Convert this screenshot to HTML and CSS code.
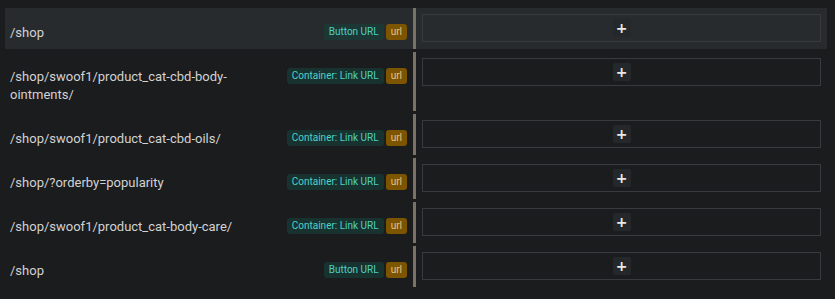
FILE: index.html
```html
<!DOCTYPE html>
<html lang="en">
<head>
    <meta charset="UTF-8">
    <title>Link map</title>
    <link rel="stylesheet" href="styles.css">
</head>
<body>
    <div class="link-list">
        <div class="link-row active">
            <div class="link-info">
                <span class="link-path">/shop</span>
                <span class="tags"><span class="tag tag-type">Button URL</span><span class="tag tag-kind">url</span></span>
            </div>
            <div class="link-target"><div class="drop-box"><button class="add-btn">+</button></div></div>
        </div>
        <div class="link-row">
            <div class="link-info">
                <span class="link-path">/shop/swoof1/product_cat-cbd-body-ointments/</span>
                <span class="tags"><span class="tag tag-type">Container: Link URL</span><span class="tag tag-kind">url</span></span>
            </div>
            <div class="link-target"><div class="drop-box"><button class="add-btn">+</button></div></div>
        </div>
        <div class="link-row">
            <div class="link-info">
                <span class="link-path">/shop/swoof1/product_cat-cbd-oils/</span>
                <span class="tags"><span class="tag tag-type">Container: Link URL</span><span class="tag tag-kind">url</span></span>
            </div>
            <div class="link-target"><div class="drop-box"><button class="add-btn">+</button></div></div>
        </div>
        <div class="link-row">
            <div class="link-info">
                <span class="link-path">/shop/?orderby=popularity</span>
                <span class="tags"><span class="tag tag-type">Container: Link URL</span><span class="tag tag-kind">url</span></span>
            </div>
            <div class="link-target"><div class="drop-box"><button class="add-btn">+</button></div></div>
        </div>
        <div class="link-row">
            <div class="link-info">
                <span class="link-path">/shop/swoof1/product_cat-body-care/</span>
                <span class="tags"><span class="tag tag-type">Container: Link URL</span><span class="tag tag-kind">url</span></span>
            </div>
            <div class="link-target"><div class="drop-box"><button class="add-btn">+</button></div></div>
        </div>
        <div class="link-row">
            <div class="link-info">
                <span class="link-path">/shop</span>
                <span class="tags"><span class="tag tag-type">Button URL</span><span class="tag tag-kind">url</span></span>
            </div>
            <div class="link-target"><div class="drop-box"><button class="add-btn">+</button></div></div>
        </div>
    </div>
</body>
</html>
```

FILE: styles.css
```css
body {
    margin: 0;
    padding: 8px 8px 0 5px;
    background-color: #1b1c1e;
    font-family: Roboto, "Liberation Sans", sans-serif;
    color: #d2d2d2;
}
.link-list {
    display: flex;
    flex-direction: column;
    gap: 3px;
}
.link-row {
    display: grid;
    grid-template-columns: 408px 1fr;
}
.link-row.active {
    background-color: #282b2e;
}
.link-info {
    display: flex;
    align-items: flex-start;
    justify-content: space-between;
    gap: 10px;
    padding: 16px 6px 7px 5px;
}
.link-path {
    font-size: 13px;
    line-height: 18px;
    width: 270px;
}
.tags {
    display: flex;
    gap: 2px;
    flex-shrink: 0;
}
.tag {
    display: block;
    height: 16px;
    line-height: 16px;
    padding: 0 5px;
    font-size: 10px;
    border-radius: 3px;
}
.tag-type {
    background-color: #183230;
    color: #4fd1c5;
}
.active .tag-type {
    background-color: #1d3735;
}
.tag-kind {
    background-color: #7d5400;
    color: #e6c487;
}
.link-target {
    border-left: 3px solid #7b7266;
    padding: 6px 6px 7px 6px;
}
.drop-box {
    height: 26px;
    border: 1px solid #383b3e;
    display: flex;
    align-items: center;
    justify-content: center;
}
.add-btn {
    width: 18px;
    height: 18px;
    padding: 0;
    border: none;
    border-radius: 2px;
    background-color: #25282b;
    color: #e8e8e8;
    font-family: "DejaVu Sans", sans-serif;
    font-size: 14px;
    font-weight: bold;
    line-height: 18px;
    cursor: pointer;
}
```
